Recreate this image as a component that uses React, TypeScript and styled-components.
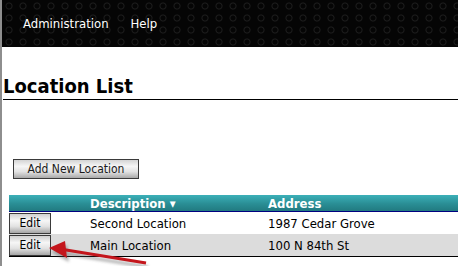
import React from 'react';
import styled, { createGlobalStyle } from 'styled-components';

const GlobalStyle = createGlobalStyle`
  html, body {
    margin: 0;
    padding: 0;
    background: #ffffff;
    overflow: hidden;
  }
  body {
    font-family: "DejaVu Sans Condensed", "DejaVu Sans", Tahoma, sans-serif;
  }
`;

const Page = styled.div`
  position: relative;
  min-height: 100vh;
  box-sizing: border-box;
  border-left: 2px solid #8e8e8e;
`;

const MenuBar = styled.div`
  height: 47px;
  display: flex;
  align-items: center;
  gap: 22px;
  padding-left: 21px;
  background-color: #050505;
  background-image: radial-gradient(circle at 50% 50%, transparent 2px, #1d1d1d 3px, transparent 4px);
  background-size: 14px 12px;
`;

const MenuItem = styled.span`
  color: #ffffff;
  font-size: 13px;
  cursor: pointer;
`;

const Title = styled.h1`
  margin: 27px 0 0 1px;
  padding-bottom: 1px;
  font-size: 20px;
  line-height: 24px;
  font-weight: bold;
  color: #000000;
  border-bottom: 1px solid #000000;
`;

const ActionButton = styled.button`
  display: block;
  margin: 59px 0 0 11px;
  width: 126px;
  height: 20px;
  padding: 0;
  font-family: inherit;
  font-size: 12px;
  color: #1a1a1a;
  border: 1px solid #3a3a3a;
  background: linear-gradient(#d4d4d4, #f6f6f6 35%, #e2e2e2 65%, #a9a9a9);
`;

const Table = styled.div`
  margin: 16px 0 0 7px;
  border-bottom: 1px solid #000000;
`;

const Row = styled.div<{ $shade?: boolean }>`
  display: grid;
  grid-template-columns: 78px 178px 1fr;
  align-items: center;
  height: 22px;
  background: ${(p) => (p.$shade ? '#dcdcdc' : '#ffffff')};
  font-size: 13px;
  color: #000000;
`;

const HeadRow = styled(Row)`
  height: 16px;
  border-bottom: 1px solid #000080;
  background: linear-gradient(#3cb0b8, #2a8e95 55%, #217a80);
  color: #ffffff;
  font-weight: bold;
`;

const Cell = styled.div`
  padding-left: 3px;
  white-space: nowrap;
`;

const EditButton = styled.button`
  width: 42px;
  height: 21px;
  padding: 0;
  font-family: inherit;
  font-size: 12px;
  color: #000000;
  border: 1px solid #3a3a3a;
  background: linear-gradient(#d0d0d0, #f6f6f6 35%, #e2e2e2 65%, #a6a6a6);
`;

const Arrow = styled.svg`
  position: absolute;
  left: 40px;
  top: 236px;
  pointer-events: none;
`;

const locations = [
  { id: 1, description: 'Second Location', address: '1987 Cedar Grove' },
  { id: 2, description: 'Main Location', address: '100 N 84th St' },
];

const App: React.FC = () => {
  return (
    <Page>
      <GlobalStyle />
      <MenuBar>
        <MenuItem>Administration</MenuItem>
        <MenuItem>Help</MenuItem>
      </MenuBar>
      <Title>Location List</Title>
      <ActionButton>Add New Location</ActionButton>
      <Table>
        <HeadRow>
          <Cell />
          <Cell>Description ▾</Cell>
          <Cell>Address</Cell>
        </HeadRow>
        {locations.map((loc, i) => (
          <Row key={loc.id} $shade={i % 2 === 1}>
            <div>
              <EditButton>Edit</EditButton>
            </div>
            <Cell>{loc.description}</Cell>
            <Cell>{loc.address}</Cell>
          </Row>
        ))}
      </Table>
      {/* red annotation arrow */}
      <Arrow width="120" height="32" viewBox="0 0 120 32">
        <defs>
          <filter id="shadow" x="-20%" y="-50%" width="140%" height="200%">
            <feGaussianBlur stdDeviation="1.6" />
          </filter>
        </defs>
        <g transform="translate(2 4)" opacity="0.45" filter="url(#shadow)">
          <line x1="18" y1="13" x2="104" y2="27" stroke="#555" strokeWidth="3" />
          <polygon points="7,12 23,5 25,22" fill="#555" />
        </g>
        <line x1="18" y1="13" x2="104" y2="27" stroke="#c4161c" strokeWidth="3" />
        <polygon points="7,12 23,5 25,22" fill="#c4161c" />
      </Arrow>
    </Page>
  );
};

export default App;
